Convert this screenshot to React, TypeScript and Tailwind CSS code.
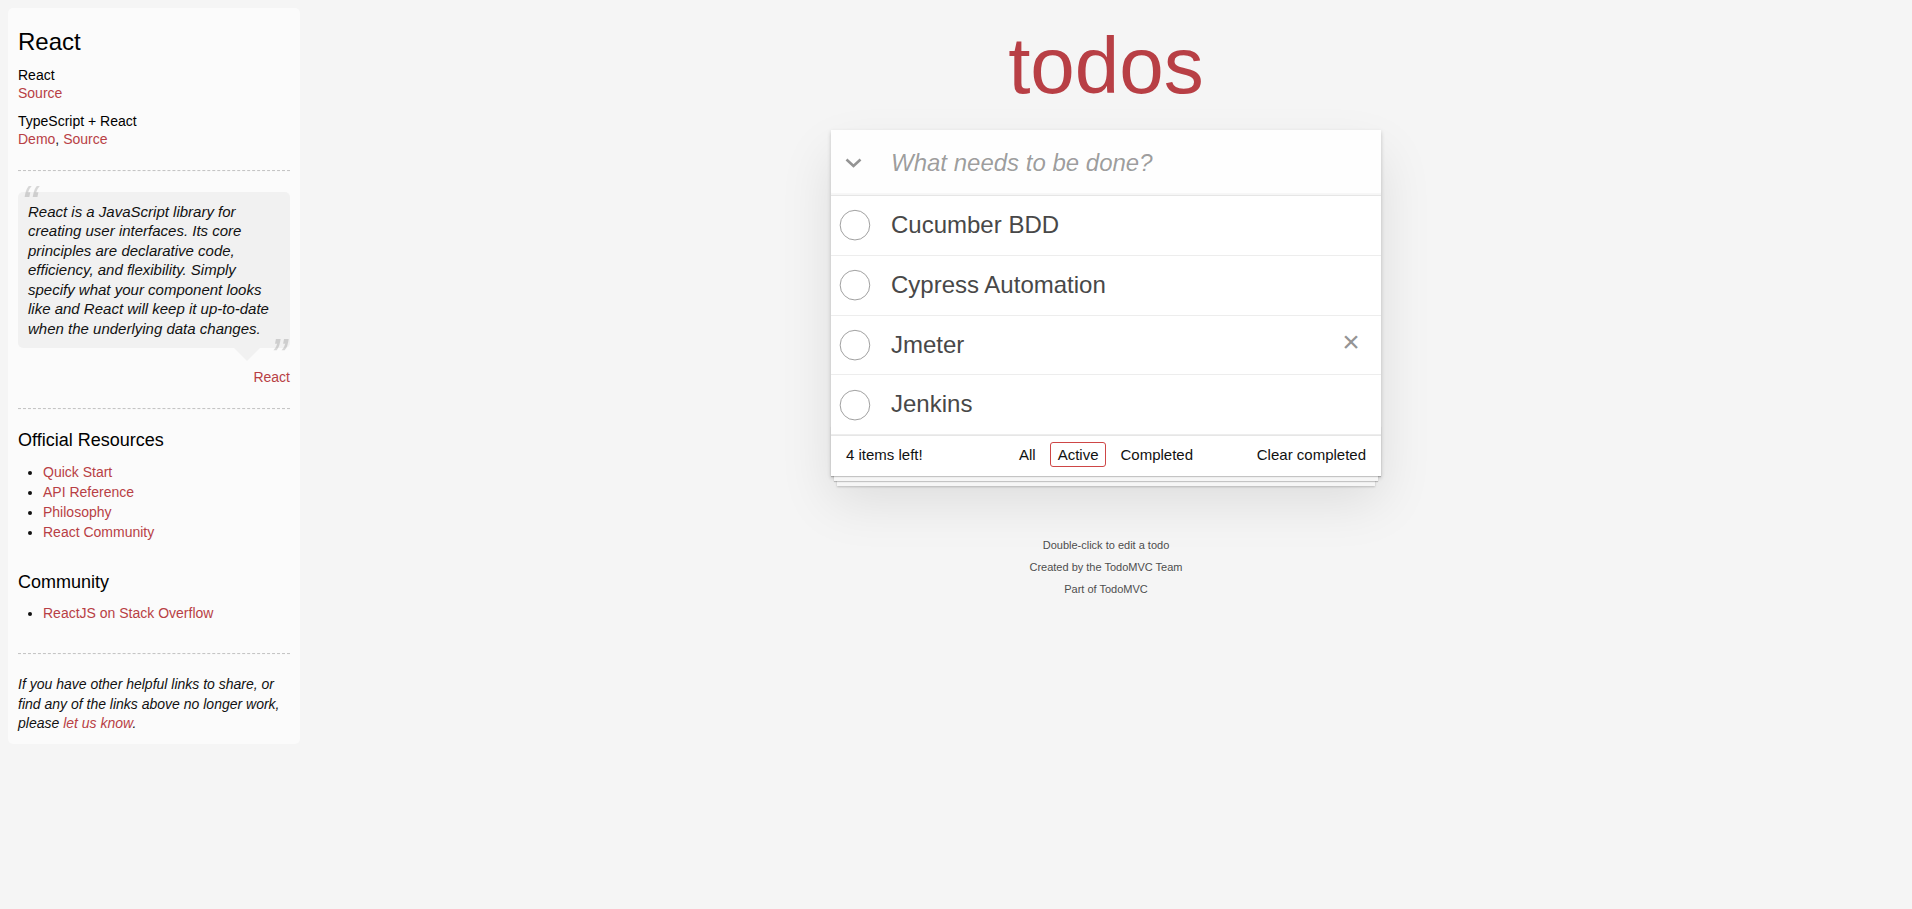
import React from "react"

const todos = ["Cucumber BDD", "Cypress Automation", "Jmeter", "Jenkins"]

function Sidebar() {
  return (
    <aside className="ml-[8px] mt-[8px] w-[292px] shrink-0 self-start rounded-[5px] bg-white/60 p-[10px] text-[14px] leading-[19.6px] text-[#111]">
      <header>
        <h3 className="my-[10px] text-[24px] leading-[1.2] font-medium text-black">React</h3>
        <span>
          <h5 className="mt-[10px] text-[14px] leading-[1.2] font-medium text-black">React</h5>
          <a href="#" className="text-[#b83f45]">Source</a>
          <h5 className="mt-[10px] text-[14px] leading-[1.2] font-medium text-black">TypeScript + React</h5>
          <a href="#" className="text-[#b83f45]">Demo</a>, <a href="#" className="text-[#b83f45]">Source</a>
        </span>
      </header>
      <hr className="my-[20px] border-0 border-t border-b border-dashed border-t-[#c5c5c5] border-b-[#f7f7f7]" />
      <blockquote className="relative mb-[60px] mt-[20px] rounded-[5px] bg-black/[0.04] p-[10px]">
        <p className="text-[15px] leading-[1.3] italic">
          <span className="absolute left-[3px] top-[-20px] text-[50px] opacity-15">“</span>
          React is a JavaScript library for creating user interfaces. Its core principles are declarative code, efficiency, and flexibility. Simply specify what your component looks like and React will keep it up-to-date when the underlying data changes.
          <span className="absolute bottom-[-42px] right-[3px] text-[50px] opacity-15">”</span>
        </p>
        <span className="absolute right-[30px] top-full border-[13px] border-transparent border-t-black/[0.04]" />
        <footer className="absolute bottom-[-40px] right-0">
          <a href="#" className="ml-[5px] align-middle text-[#b83f45]">React</a>
        </footer>
      </blockquote>
      <hr className="my-[20px] border-0 border-t border-b border-dashed border-t-[#c5c5c5] border-b-[#f7f7f7]" />
      <h4 className="my-[10px] text-[18px] leading-[1.2] font-medium text-black">Official Resources</h4>
      <ul className="mb-[30px] ml-[25px] list-disc">
        {["Quick Start", "API Reference", "Philosophy", "React Community"].map((l) => (
          <li key={l} className="leading-[20px]">
            <a href="#" className="text-[#b83f45]">{l}</a>
          </li>
        ))}
      </ul>
      <h4 className="mb-[10px] mt-[30px] text-[18px] leading-[1.2] font-medium text-black">Community</h4>
      <ul className="mb-[30px] ml-[25px] list-disc">
        <li className="leading-[20px]">
          <a href="#" className="text-[#b83f45]">ReactJS on Stack Overflow</a>
        </li>
      </ul>
      <footer>
        <hr className="mb-[20px] mt-[30px] border-0 border-t border-b border-dashed border-t-[#c5c5c5] border-b-[#f7f7f7]" />
        <em className="block">
          If you have other helpful links to share, or find any of the links above no longer work, please{" "}
          <a href="#" className="text-[#b83f45]">let us know</a>.
        </em>
      </footer>
    </aside>
  )
}

function Circle() {
  return (
    <svg width="40" height="40" viewBox="-10 -18 100 135" className="shrink-0">
      <circle cx="50" cy="50" r="50" fill="none" stroke="#949494" strokeWidth="3" />
    </svg>
  )
}

export default function App() {
  return (
    <div className="flex min-h-screen bg-[#f5f5f5] font-['Liberation_Sans',Arial,sans-serif] text-[14px] leading-[19.6px] text-[#111]">
      <Sidebar />
      <main className="flex flex-1 justify-center">
        <div className="w-[550px]">
          <h1 className="mt-[26px] text-center text-[80px] leading-[80px] font-extralight text-[#b83f45]">todos</h1>

          <section className="relative mt-[24px] bg-white shadow-[0_2px_4px_0_rgba(0,0,0,0.2),0_25px_50px_0_rgba(0,0,0,0.1)]">
            <span className="pointer-events-none absolute inset-x-0 bottom-0 h-[50px] shadow-[0_1px_1px_rgba(0,0,0,0.2),0_8px_0_-3px_#f6f6f6,0_9px_1px_-3px_rgba(0,0,0,0.2),0_16px_0_-6px_#f6f6f6,0_17px_2px_-6px_rgba(0,0,0,0.2)]" />

            <header className="relative flex h-[65px] items-center bg-black/[0.003] shadow-[inset_0_-2px_1px_rgba(0,0,0,0.03)]">
              <span className="flex h-[65px] w-[45px] shrink-0 items-center justify-center">
                <svg width="17" height="10" viewBox="0 0 17 10">
                  <path d="M1.5 1.5 L8.5 8 L15.5 1.5" fill="none" stroke="#949494" strokeWidth="2.6" />
                </svg>
              </span>
              <input
                className="ml-[15px] h-full flex-1 bg-transparent pr-[16px] text-[24px] leading-[33.6px] text-[#111] outline-none placeholder:italic placeholder:text-black/40"
                placeholder="What needs to be done?"
              />
            </header>

            <ul className="relative border-t border-[#e6e6e6]">
              {todos.map((t) => (
                <li key={t} className="flex items-center border-b border-[#ededed] text-[24px]">
                  <span className="ml-[1px]">
                    <Circle />
                  </span>
                  <label className="block flex-1 py-[15px] pl-[19px] pr-[15px] leading-[1.2] font-normal text-[#484848]">{t}</label>
                  {t === "Jmeter" && (
                    <button className="mr-[10px] flex h-[40px] w-[40px] items-start justify-center text-[30px] leading-[1.1] text-[#949494]">
                      ×
                    </button>
                  )}
                </li>
              ))}
            </ul>

            <footer className="relative grid h-[41px] grid-cols-[1fr_auto_1fr] border-t border-[#e6e6e6] px-[15px] pb-[11px] pt-[9px] text-[15px] leading-[19.6px]">
              <span className="text-left">
                <strong className="font-normal">4</strong> items left!
              </span>
              <ul className="text-center">
                <li className="inline">
                  <a href="#" className="m-[3px] rounded-[3px] border border-transparent px-[7px] py-[3px]">All</a>
                </li>
                <li className="inline">
                  <a href="#" className="m-[3px] rounded-[3px] border border-[#ce4646] px-[7px] py-[3px]">Active</a>
                </li>
                <li className="inline">
                  <a href="#" className="m-[3px] rounded-[3px] border border-transparent px-[7px] py-[3px]">Completed</a>
                </li>
              </ul>
              <button className="justify-self-end self-start leading-[19px]">Clear completed</button>
            </footer>
          </section>

          <footer className="mt-[64px] text-center text-[11px] leading-none text-[#4d4d4d] [text-shadow:0_1px_0_rgba(255,255,255,0.5)]">
            <p>Double-click to edit a todo</p>
            <p className="mt-[11px]">
              Created by the <a href="#">TodoMVC Team</a>
            </p>
            <p className="mt-[11px]">
              Part of <a href="#">TodoMVC</a>
            </p>
          </footer>
        </div>
      </main>
    </div>
  )
}
